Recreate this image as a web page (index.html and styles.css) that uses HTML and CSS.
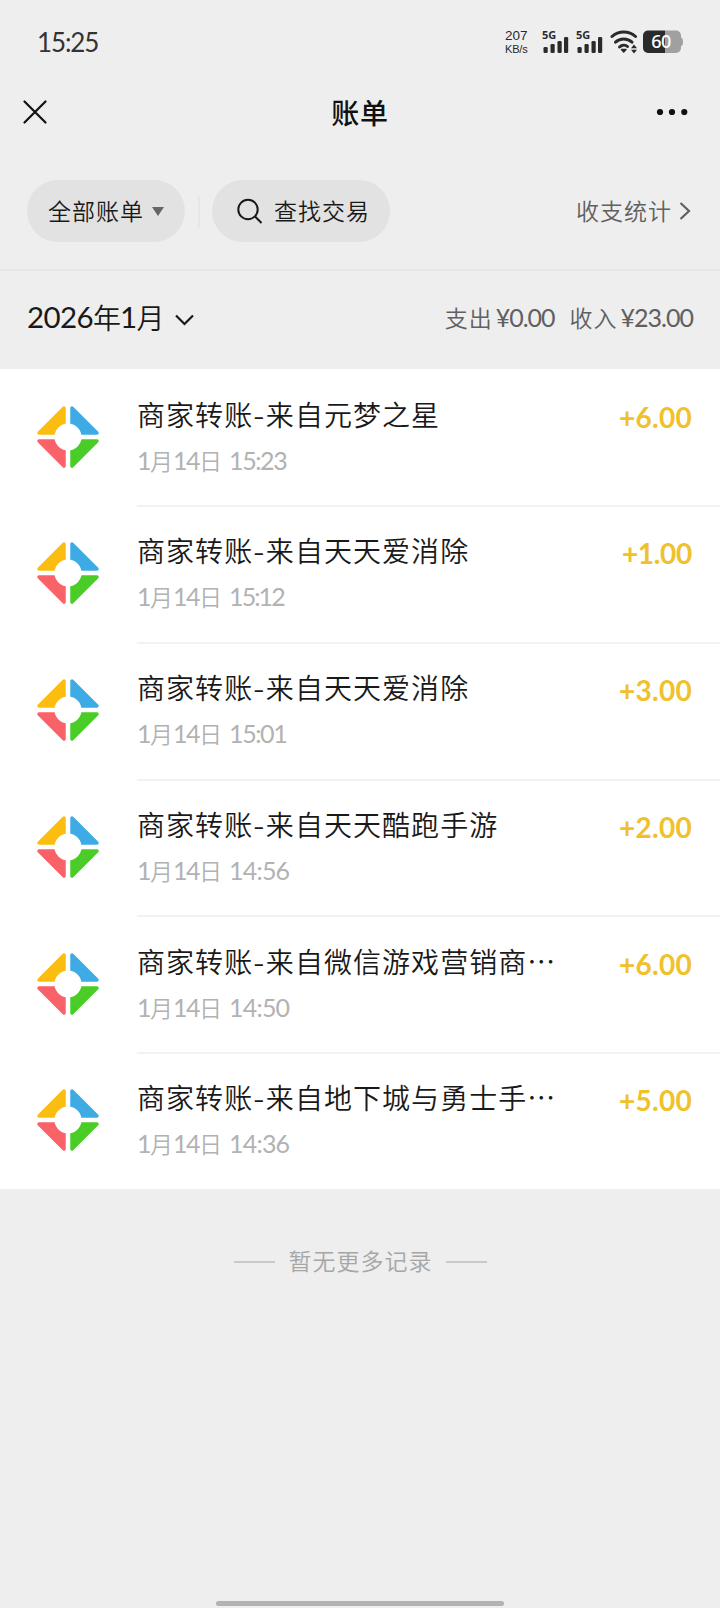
FILE: index.html
```html
<!DOCTYPE html>
<html lang="zh-CN">
<head>
<meta charset="utf-8">
<title>账单</title>
<link rel="stylesheet" href="styles.css">
</head>
<body>
<header class="status">
  <span class="clock">15:25</span>
  <div class="status-icons">
    <div class="speed"><span>207</span><span class="unit">KB/s</span></div>
    <svg class="signal" width="27" height="24" viewBox="0 0 27 24" fill="#2a2a2a">
      <rect x="1.500" y="17" width="4.200" height="6" rx="1.300"/><rect x="8.500" y="14" width="4.200" height="9" rx="1.300"/><rect x="15.500" y="11" width="4.200" height="12" rx="1.300"/><rect x="22" y="7" width="4.200" height="16" rx="1.300"/>
      <text class="sig-text" x="0" y="9">5G</text>
    </svg>
    <svg class="signal" width="27" height="24" viewBox="0 0 27 24" fill="#2a2a2a">
      <rect x="1.500" y="17" width="4.200" height="6" rx="1.300"/><rect x="8.500" y="14" width="4.200" height="9" rx="1.300"/><rect x="15.500" y="11" width="4.200" height="12" rx="1.300"/><rect x="22" y="7" width="4.200" height="16" rx="1.300"/>
      <text class="sig-text" x="0" y="9">5G</text>
    </svg>
    <svg class="wifi" width="28" height="24" viewBox="0 0 28 24" fill="none" stroke="#2a2a2a" stroke-width="3" stroke-linecap="round">
      <path d="M2 6.500C8.500.5 19 .5 25.500 6.500"/><path d="M5.500 12.200C10 8 17.500 8 22 12.200"/><path d="M9.500 17C12 14.700 15.500 14.700 17.500 16.500"/>
      <path d="M11.500 19.500H16L13.700 22Z" fill="#2a2a2a" stroke-width="1.500" stroke-linejoin="round"/>
      <path d="M24 14.500 21 18.200H27ZM24 23.500 21 19.800H27Z" fill="#2a2a2a" stroke="none"/>
    </svg>
    <svg class="battery" width="40" height="24" viewBox="0 0 40 24">
      <path d="M22 .5H33A5 5 0 0 1 38 5.500V7.500Q40 8 40 12T38 16V18A5 5 0 0 1 33 23H22Z" fill="#a0a0a0"/>
      <path d="M5 .5H22V23H5A5 5 0 0 1 0 18V5.500A5 5 0 0 1 5 .5Z" fill="#2b2b2b"/>
      <text class="battery-text" x="18" y="18.300" text-anchor="middle">60</text>
    </svg>
  </div>
</header>
<nav class="nav">
  <svg width="24" height="24" viewBox="0 0 24 24" fill="none" stroke="#111" stroke-width="2.200" stroke-linecap="round"><path d="M1.500 1.500 22.500 22.500M22.500 1.500 1.500 22.500"/></svg>
  <h1 class="nav-title">账单</h1>
  <svg width="32" height="8" viewBox="0 0 32 8" fill="#111"><circle cx="4" cy="4" r="3.100"/><circle cx="16" cy="4" r="3.100"/><circle cx="28.300" cy="4" r="3.100"/></svg>
</nav>
<section class="filters">
  <div class="pill pill-all"><span class="label">全部账单</span><svg width="12" height="9" viewBox="0 0 12 9"><path d="M0 0H12L6 9Z" fill="#666"/></svg></div>
  <div class="split"></div>
  <div class="pill pill-search"><svg width="26" height="26" viewBox="0 0 26 26" fill="none" stroke="#191919" stroke-width="2"><circle cx="11" cy="11.500" r="9.700"/><path d="M17.800 18.300 24.500 25"/></svg><span class="label">查找交易</span></div>
  <div class="stats"><span class="label">收支统计</span><svg width="12" height="18" viewBox="0 0 12 18" fill="none" stroke="#606060" stroke-width="2.200"><path d="M1.500 1 10 9 1.500 17"/></svg></div>
</section>
<section class="month">
  <div class="month-pick"><span class="num">2026</span>年<span class="num">1</span>月<svg width="19" height="12" viewBox="0 0 19 12" fill="none" stroke="#191919" stroke-width="2.200"><path d="M1 1.500 9.500 10 18 1.500"/></svg></div>
  <div class="totals"><span>支出<b class="sum">¥0.00</b></span><span>收入<b class="sum">¥23.00</b></span></div>
</section>
<svg class="defs" aria-hidden="true">
  <symbol id="logo" viewBox="0 0 62 62">
    <g stroke-width="3.500" stroke-linejoin="round">
      <path fill="#fbbe10" stroke="#fbbe10" d="M27 2V17.500A14 14 0 0 0 17.500 27H2Z"/>
      <path fill="#3fabe4" stroke="#3fabe4" d="M35 2V17.500A14 14 0 0 1 44.500 27H60Z"/>
      <path fill="#f96268" stroke="#f96268" d="M27 60V44.500A14 14 0 0 1 17.500 35H2Z"/>
      <path fill="#4acd27" stroke="#4acd27" d="M35 60V44.500A14 14 0 0 0 44.500 35H60Z"/>
    </g>
    <circle cx="31" cy="31" r="13.500" fill="#fff"/>
  </symbol>
</svg>
<main class="list">
  <article class="row"><svg class="logo"><use href="#logo"/></svg><div class="body"><div class="info"><div class="name">商家转账<span class="dash">-</span>来自元梦之星</div><div class="date"><i>1</i>月<i>14</i>日<i class="time">15:23</i></div></div><div class="amount">+6.00</div></div></article>
  <article class="row"><svg class="logo"><use href="#logo"/></svg><div class="body"><div class="info"><div class="name">商家转账<span class="dash">-</span>来自天天爱消除</div><div class="date"><i>1</i>月<i>14</i>日<i class="time tight">15:12</i></div></div><div class="amount tight">+1.00</div></div></article>
  <article class="row"><svg class="logo"><use href="#logo"/></svg><div class="body"><div class="info"><div class="name">商家转账<span class="dash">-</span>来自天天爱消除</div><div class="date"><i>1</i>月<i>14</i>日<i class="time">15:01</i></div></div><div class="amount">+3.00</div></div></article>
  <article class="row"><svg class="logo"><use href="#logo"/></svg><div class="body"><div class="info"><div class="name">商家转账<span class="dash">-</span>来自天天酷跑手游</div><div class="date"><i>1</i>月<i>14</i>日<i class="time wide">14:56</i></div></div><div class="amount">+2.00</div></div></article>
  <article class="row"><svg class="logo"><use href="#logo"/></svg><div class="body"><div class="info"><div class="name">商家转账<span class="dash">-</span>来自微信游戏营销商…</div><div class="date"><i>1</i>月<i>14</i>日<i class="time wide">14:50</i></div></div><div class="amount">+6.00</div></div></article>
  <article class="row"><svg class="logo"><use href="#logo"/></svg><div class="body"><div class="info"><div class="name">商家转账<span class="dash">-</span>来自地下城与勇士手…</div><div class="date"><i>1</i>月<i>14</i>日<i class="time wide">14:36</i></div></div><div class="amount">+5.00</div></div></article>
</main>
<footer class="end"><span class="end-line"></span><span class="end-text">暂无更多记录</span><span class="end-line"></span></footer>
<div class="home"></div>
</body>
</html>
```
FILE: styles.css
```css
* { box-sizing: border-box; }
body {
  margin: 0;
  height: 1608px;
  display: flex;
  flex-direction: column;
  background: #eee;
  color: #191919;
  font-family: "Noto Sans CJK SC", sans-serif;
  font-weight: 350;
  white-space: nowrap;
}
svg { display: block; flex: none; }
.defs { position: absolute; width: 0; height: 0; }
.status {
  height: 84px;
  padding: 0 37px 0 37px;
  display: flex;
  align-items: center;
  justify-content: space-between;
}
.clock { font: 400 26px/32px Lato, sans-serif; letter-spacing: -1.1px; color: #333; }
.status-icons { display: flex; align-items: center; }
.speed {
  width: 37px;
  display: flex;
  flex-direction: column;
  font: 400 13.5px/14px "Liberation Sans", sans-serif;
  color: #2a2a2a;
}
.unit { font-size: 11px; line-height: 12px; letter-spacing: -0.2px; }
.signal { margin-right: 7px; overflow: visible; }
.wifi { margin-right: 5px; }
.sig-text { font: 700 11px "Noto Sans", sans-serif; }
.battery-text { font: 500 18px "Noto Sans", sans-serif; letter-spacing: -0.5px; fill: #fff; }
.nav {
  height: 56px;
  padding: 0 32px 0 23px;
  display: grid;
  grid-template-columns: 100px 1fr 100px;
  align-items: center;
}
.nav svg:last-child { justify-self: end; }
.nav-title { margin: 0; padding: 0 0 0 9px; text-align: center; font-size: 28px; line-height: 40px; font-weight: 500; letter-spacing: 0.8px; color: #111; }
.filters {
  height: 131px;
  padding: 40px 29px 0 27px;
  display: flex;
  align-items: flex-start;
  border-bottom: 2px solid #e7e7e7;
  font-size: 23px;
  letter-spacing: 1px;
}
.label { padding-bottom: 3px; }
.pill { height: 62px; display: flex; align-items: center; border-radius: 31px; background: #e2e2e2; }
.pill-all { width: 158px; padding-left: 21px; gap: 8px; }
.pill-search { width: 178px; padding-left: 25px; gap: 11px; }
.split { width: 2px; height: 32px; margin: 16px 12px 0 13px; background: #e6e6e6; }
.stats { height: 62px; margin-left: auto; display: flex; align-items: center; gap: 7px; color: #606060; }
.month { height: 97.5px; padding: 0 28px 6px; display: flex; align-items: center; justify-content: space-between; }
.month-pick { display: flex; align-items: center; font-size: 28px; line-height: 40px; }
.num { font: 400 29.5px/40px Lato, sans-serif; letter-spacing: -0.6px; margin-left: -1px; }
.month-pick svg { margin: 6px 0 0 10px; }
.totals { display: flex; gap: 16px; color: #606060; font-size: 23px; letter-spacing: 1px; }
.sum { font: 400 25px Lato, sans-serif; letter-spacing: -1px; margin: 0 -1px 0 3px; }
.list { background: #fff; }
.row { height: 136.75px; display: flex; padding-left: 37px; }
.logo { width: 62px; height: 62px; margin: 37px 38px 0 0; overflow: visible; }
.body { flex: 1; height: 138.5px; display: flex; justify-content: space-between; padding: 25px 28px 0 0; border-bottom: 2px solid #f2f2f2; }
.row:last-child .body { border-bottom: 0; }
.name { font-size: 28px; line-height: 40px; letter-spacing: 1.05px; }
.dash { display: inline-block; transform: scaleX(1.15); margin: 0 1px; }
.date { display: flex; margin-top: 11px; font-size: 23px; line-height: 30px; color: #b2b2b2; }
.date i { font: 400 25px/30px Lato, sans-serif; letter-spacing: -1.5px; }
.date .time { margin-left: 7px; letter-spacing: -1.4px; }
.date .tight { letter-spacing: -1.9px; }
.date .wide { letter-spacing: -0.8px; }
.amount { font: 700 28px/46px Lato, sans-serif; letter-spacing: 0.3px; color: #f0c12a; }
.amount.tight { letter-spacing: -0.3px; }
.end { display: flex; align-items: center; justify-content: center; gap: 14px; margin-top: 53px; height: 40px; font-size: 23px; color: #a6a6a6; }
.end-text { letter-spacing: 1px; margin-right: -1px; padding-bottom: 4px; }
.end-line { width: 41px; height: 2px; background: #c9c9c9; }
.home { width: 288px; height: 5px; margin: auto auto 2px; border-radius: 3px; background: #b3b3b3; }
```
